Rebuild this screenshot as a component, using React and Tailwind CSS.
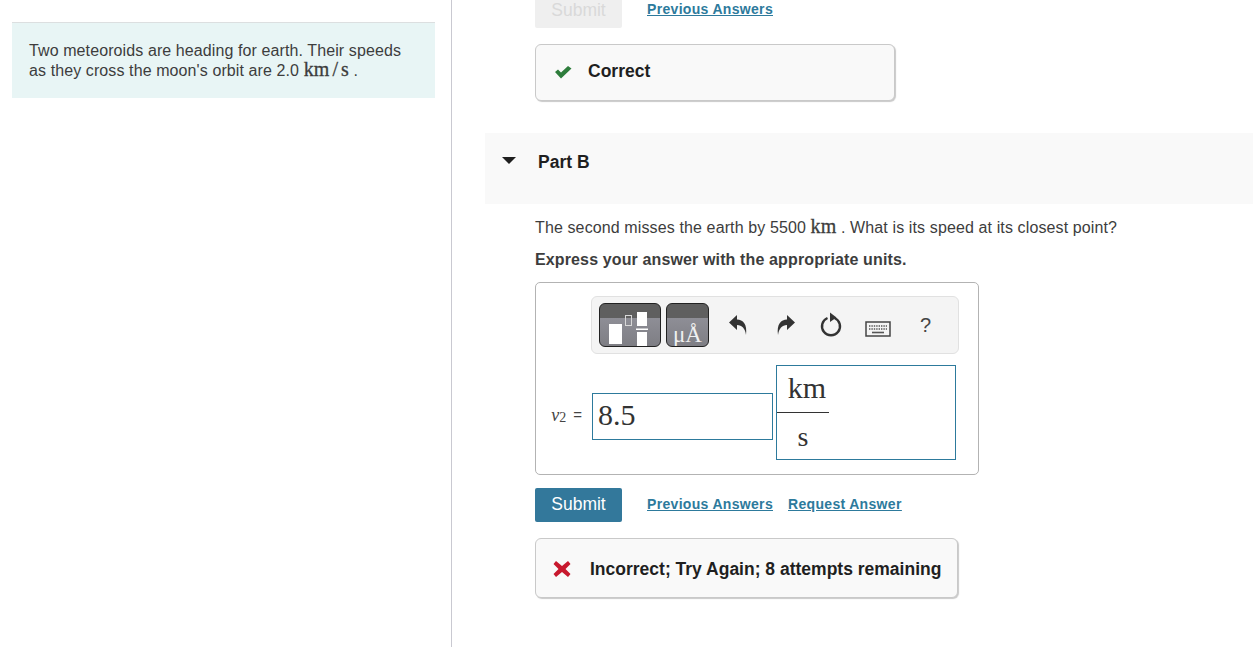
import React from "react";

const sans = { fontFamily: '"Liberation Sans", Arial, sans-serif' };

function Unit({ children, className = "" }) {
  return <span className={`font-['Liberation_Serif',serif] text-[20px] leading-[0] [-webkit-text-stroke:0.3px] ${className}`}>{children}</span>;
}

function Links({ request, className = "" }) {
  return (
    <div className={`flex gap-[15px] text-[14px] font-bold tracking-[0.32px] text-[#2d7a9c] underline ${className}`}>
      <a href="#" className="ml-[25px]">Previous Answers</a>
      {request && <a href="#">Request Answer</a>}
    </div>
  );
}

function TemplateIcon() {
  return (
    <svg width="62" height="44" viewBox="0 0 62 44" className="block">
      <rect x="9" y="20" width="13" height="20" fill="#fff" />
      <rect x="25.5" y="11.5" width="6" height="10" fill="none" stroke="#d8d8d8" strokeWidth="1" />
      <rect x="37" y="8" width="10" height="14" fill="#fff" />
      <rect x="36" y="24.5" width="12" height="1.5" fill="#fff" />
      <rect x="37" y="28" width="10" height="14" fill="#fff" />
    </svg>
  );
}

function ToolIcons() {
  return (
    <div className="ml-[19px] flex items-center">
      {/* undo */}
      <svg width="20" height="24" viewBox="0 0 20 24" className="block">
        <path d="M1 9.5 L9 2 V6.5 C15 6.5 19.5 11 18 22 C17 15 14 12.5 9 12 V17 Z" fill="#333" />
      </svg>
      {/* redo */}
      <svg width="20" height="24" viewBox="0 0 20 24" className="ml-[28px] block">
        <path d="M19 9.5 L11 2 V6.5 C5 6.5 0.5 11 2 22 C3 15 6 12.5 11 12 V17 Z" fill="#333" />
      </svg>
      {/* reset */}
      <svg width="24" height="30" viewBox="0 0 24 30" className="ml-[23px] block">
        <path d="M15.5 8 A9 9 0 1 1 8.5 8" fill="none" stroke="#333" strokeWidth="2.4" />
        <path d="M11 2.5 L17.5 7.5 L11 12 Z" fill="#333" />
      </svg>
      {/* keyboard */}
      <svg width="26" height="18" viewBox="0 0 26 18" className="mt-[8px] ml-[22px] block">
        <rect x="1" y="2" width="24" height="14" fill="#f4f4f4" stroke="#444" strokeWidth="1.5" />
        <path d="M4 6 H22 M4 9 H22" stroke="#555" strokeWidth="1.6" strokeDasharray="1.4 1" fill="none" />
        <path d="M7 12.5 H19" stroke="#555" strokeWidth="1.6" fill="none" />
      </svg>
      <span className="ml-[29px] text-[20px] leading-none text-[#444]">?</span>
    </div>
  );
}

export default function App() {
  return (
    <div className="flex h-[647px] overflow-hidden bg-white text-[16px] text-[#3d3d3d]" style={sans}>
      {/* Left passage */}
      <aside className="w-[452px] shrink-0 border-r border-[#c9c9d1] pt-[22px] pl-[12px]">
        <div className="h-[76px] w-[423px] border-t border-[#dcdfe0] bg-[#e8f5f5] pt-[18px] pl-[17px] leading-[20px] tracking-[0.1px]">
          <p>Two meteoroids are heading for earth. Their speeds</p>
          <p>
            as they cross the moon's orbit are 2.0 <Unit>km<span className="mx-[3px]">/</span>s</Unit> .
          </p>
        </div>
      </aside>

      {/* Question column */}
      <main className="ml-[33px] flex-1">
        <div className="ml-[50px] -mt-[6px] flex h-[34px] items-center">
          <button className="h-[34px] w-[87px] rounded-[2px] bg-[#efefef] pb-[2px] text-[17.5px] text-[#d9d9d9]">Submit</button>
          <Links className="mb-[3px]" />
        </div>

        <div className="ml-[50px] mt-[16px] flex h-[57px] w-[360px] items-center rounded-[6px] border border-[#c9c9c9] bg-[#f9f9f9] pb-[2px] pl-[18px] text-[17.5px] font-bold text-[#1f1f1f] shadow-[1px_1px_1px_#c9c9c9]">
          <svg width="18" height="14" viewBox="0 0 18 14" className="block">
            <path d="M1 7 L4 4.5 L7 7.5 L14 1 L17.5 3.5 L7 13.5 Z" fill="#2e7d3c" />
          </svg>
          <span className="ml-[16px]">Correct</span>
        </div>

        <div className="mt-[32px] flex h-[71px] items-start bg-[#f9f9f9] pt-[16px]">
          <svg width="14" height="7" viewBox="0 0 14 7" className="mt-[8px] ml-[17px] block">
            <path d="M0 0 H14 L7 7 Z" fill="#1f1f1f" />
          </svg>
          <span className="ml-[22px] text-[17.5px] font-bold text-[#1f1f1f]">Part B</span>
        </div>

        <div className="ml-[50px]">
          <p className="mt-[14px] leading-[20px] tracking-[0.12px]">
            The second misses the earth by 5500 <Unit>km</Unit> . What is its speed at its closest point?
          </p>
          <p className="mt-[12px] leading-[20px] font-bold tracking-[0.13px]">Express your answer with the appropriate units.</p>

          {/* Answer box */}
          <div className="mt-[12px] h-[193px] w-[444px] rounded-[5px] border border-[#b3b3b3] pt-[13px]">
            <div className="ml-[55px] flex h-[58px] w-[368px] items-center rounded-[6px] border border-[#e1e1e1] bg-[#f4f4f4] pl-[7px]">
              <div className="h-[44px] w-[62px] overflow-hidden rounded-[6px] border border-[#222] bg-[linear-gradient(#5f5f5f_0,#5f5f5f_33%,#8e8e96_33%,#7e7e84_100%)]">
                <TemplateIcon />
              </div>
              <div className="ml-[5px] flex h-[44px] w-[43px] items-end justify-center overflow-hidden rounded-[6px] border border-[#222] bg-[linear-gradient(#5f5f5f_0,#5f5f5f_33%,#8e8e96_33%,#7e7e84_100%)] font-['Liberation_Serif',serif] text-[23px] leading-none text-[#f0f0f0]">
                μÅ
              </div>
              <ToolIcons />
            </div>

            <div className="mt-[11px] flex items-start">
              <div className="mt-[28px] flex h-[44px] w-[56px] items-center justify-end pr-[10px] text-[15px] text-[#444]">
                <span className="font-['Liberation_Serif',serif] text-[18px] italic">v</span>
                <span className="mt-[5px] font-['Liberation_Serif',serif] text-[14px]">2</span>
                <span className="ml-[7px]">=</span>
              </div>
              <div className="mt-[28px] h-[47px] w-[181px] border border-[#2d7a9c] pl-[5px] font-['Liberation_Serif',serif] text-[30px] leading-[42px] text-[#333]">
                8.5
              </div>
              <div className="ml-[3px] h-[95px] w-[180px] border border-[#2d7a9c] font-['Liberation_Serif',serif] text-[30px] text-[#333]">
                <div className="h-[47px] w-[52px] border-b border-[#333] pl-[8px] text-center leading-[44px]">km</div>
                <div className="w-[52px] text-center text-[28px] leading-[47px]">s</div>
              </div>
            </div>
          </div>

          <div className="mt-[13px] flex h-[34px] items-center">
            <button className="h-[34px] w-[87px] rounded-[2px] bg-[#33789b] pb-[2px] text-[17.5px] text-white">Submit</button>
            <Links request className="mb-[2px]" />
          </div>

          <div className="mt-[16px] flex h-[60px] w-[423px] items-center rounded-[6px] border border-[#c9c9c9] bg-[#f9f9f9] pt-[2px] pl-[17px] text-[17.5px] font-bold text-[#1f1f1f] shadow-[1px_1px_1px_#c9c9c9]">
            <svg width="18" height="18" viewBox="0 0 18 18" className="block">
              <path d="M3 1 L9 6 L15 1 L17.5 4 L12.5 9 L17.5 14 L15 17 L9 12 L3 17 L0.5 14 L5.5 9 L0.5 4 Z" fill="#c8192e" />
            </svg>
            <span className="ml-[19px]">Incorrect; Try Again; 8 attempts remaining</span>
          </div>
        </div>
      </main>
    </div>
  );
}
